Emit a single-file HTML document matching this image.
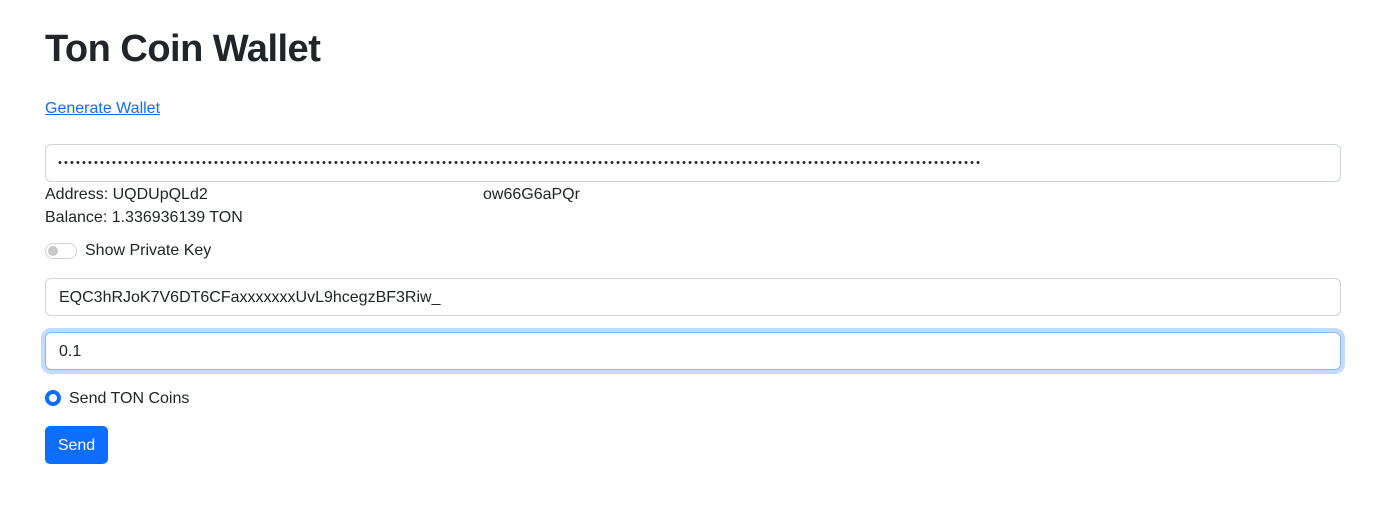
<!DOCTYPE html>
<html><head><meta charset="utf-8"><style>
body{margin:0;background:#fff;font-family:"Liberation Sans",sans-serif;color:#212529;font-size:16px;width:1379px;height:527px;overflow:hidden;position:relative}
.a{position:absolute}
h1{position:absolute;left:45px;top:25px;margin:0;font-size:38px;font-weight:bold;line-height:48px;letter-spacing:-0.5px}
.inp{position:absolute;left:45px;width:1294px;height:36px;border:1px solid #ced4da;border-radius:6px;box-sizing:content-box}
.inp span{position:absolute;left:13px;top:9px;font-size:16px;line-height:20px}
</style></head><body>
<h1>Ton Coin Wallet</h1>
<a class="a" style="left:45px;top:100px;color:#0d6efd;text-decoration:underline;font-size:16px">Generate Wallet</a>
<div class="inp" style="top:144px"><span style="font-size:11px;letter-spacing:2.15px;top:8px;left:12px;line-height:20px">••••••••••••••••••••••••••••••••••••••••••••••••••••••••••••••••••••••••••••••••••••••••••••••••••••••••••••••••••••••••••••••••••••••••••••••••••••••••••</span></div>
<div class="a" style="left:45px;top:186px;font-size:16px">Address: UQDUpQLd2</div>
<div class="a" style="left:213px;top:184px;width:270px;height:20px;background:#fff"></div>
<div class="a" style="left:483px;top:186px;font-size:16px">ow66G6aPQr</div>
<div class="a" style="left:45px;top:209px;font-size:16px">Balance: 1.336936139 TON</div>
<div class="a" style="left:45px;top:243px;width:30px;height:14px;border:1px solid #ced4da;border-radius:8px"><div style="position:absolute;left:2px;top:2px;width:10px;height:10px;border-radius:50%;background:#c8c8c8"></div></div>
<div class="a" style="left:85px;top:242px;font-size:16px">Show Private Key</div>
<div class="inp" style="top:278px"><span>EQC3hRJoK7V6DT6CFaxxxxxxxUvL9hcegzBF3Riw_</span></div>
<div class="inp" style="top:332px;border-color:#86b7fe;box-shadow:0 0 0 4px rgba(13,110,253,.25)"><span>0.1</span></div>
<div class="a" style="left:45px;top:390px;width:8px;height:8px;border:4px solid #0d6efd;border-radius:50%;background:#fff"></div>
<div class="a" style="left:69px;top:390px;font-size:16px">Send TON Coins</div>
<div class="a" style="left:45px;top:426px;width:63px;height:38px;background:#0d6efd;border-radius:5px;color:#fff;font-size:16px;line-height:40px;text-align:center">Send</div>
</body></html>
